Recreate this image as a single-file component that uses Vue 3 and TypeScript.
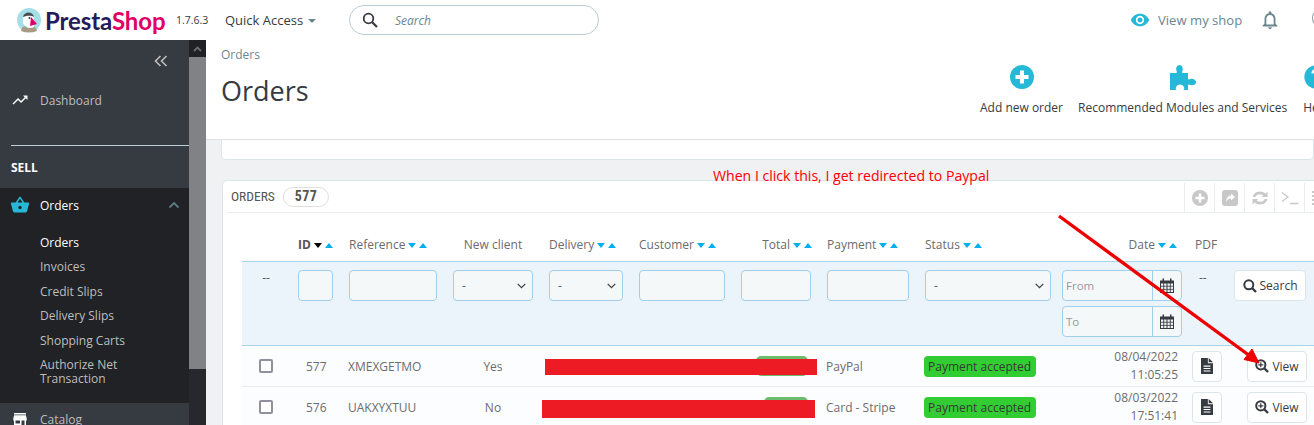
<script setup lang="ts">
const subItems = ['Orders', 'Invoices', 'Credit Slips', 'Delivery Slips', 'Shopping Carts', 'Authorize Net Transaction']

interface Col { label: string; cls: string; sort: boolean }
const cols: Col[] = [
  { label: '', cls: '', sort: false },
  { label: 'ID', cls: 'h-id', sort: true },
  { label: 'Reference', cls: '', sort: true },
  { label: 'New client', cls: 'h-new', sort: false },
  { label: 'Delivery', cls: '', sort: true },
  { label: 'Customer', cls: '', sort: true },
  { label: 'Total', cls: 'h-total', sort: true },
  { label: 'Payment', cls: '', sort: true },
  { label: 'Status', cls: '', sort: true },
  { label: 'Date', cls: 'h-date', sort: true },
  { label: 'PDF', cls: 'h-pdf', sort: false },
  { label: '', cls: '', sort: false },
]

interface Row {
  id: number; ref: string; isNew: string; pay: string; d: string; t: string;
  totalClass: string; redClass: string
}
const rows: Row[] = [
  { id: 577, ref: 'XMEXGETMO', isNew: 'Yes', pay: 'PayPal', d: '08/04/2022', t: '11:05:25', totalClass: 't1', redClass: 'r1' },
  { id: 576, ref: 'UAKXYXTUU', isNew: 'No', pay: 'Card - Stripe', d: '08/03/2022', t: '17:51:41', totalClass: 't2', redClass: 'r2' },
]
</script>

<template>
  <div class="app">
    <header class="top">
      <div class="logo">
        <svg width="26" height="26" viewBox="0 0 26 26" class="bird">
          <circle cx="13" cy="13" r="12" fill="#a4dfe8" />
          <path d="M5 24 C6 19 8 19 13 19 C18 19 20 20 21 24 Q13 27 5 24Z" fill="#a99a86" />
          <path d="M7 12 C7 6 17 5 18 11 L18 20 C14 22 9 21 7 16Z" fill="#fff" />
          <path d="M7 10 C8 4 17 4 18 10 C14 8 11 9 7 10Z" fill="#4b4b52" />
          <path d="M15 10 L21 17 L14 19 Z" fill="#df0067" />
          <circle cx="13.5" cy="11" r="1" fill="#333" />
        </svg>
        <span class="wordmark"><span class="presta">Presta</span><span class="shop">Shop</span></span>
      </div>
      <span class="version">1.7.6.3</span>
      <span class="quick">Quick Access<i class="caret"></i></span>
      <div class="search">
        <svg width="16" height="16" viewBox="0 0 16 16" fill="none" stroke="#363a41" stroke-width="1.8">
          <circle cx="6.5" cy="6.5" r="4.8" />
          <path d="M10 10 L15 15" stroke-width="2.2" />
        </svg>
        <span>Search</span>
      </div>
      <div class="top-right">
        <svg width="20" height="20" viewBox="0 0 24 24" fill="#25b9d7">
          <path d="M12 4.5C7 4.5 2.73 7.61 1 12c1.73 4.39 6 7.5 11 7.5s9.27-3.11 11-7.5c-1.73-4.39-6-7.5-11-7.5zM12 17c-2.76 0-5-2.24-5-5s2.24-5 5-5 5 2.24 5 5-2.24 5-5 5zm0-8c-1.66 0-3 1.34-3 3s1.34 3 3 3 3-1.34 3-3-1.34-3-3-3z" />
        </svg>
        <span class="shop-link">View my shop</span>
        <svg class="bell" width="22" height="22" viewBox="0 0 24 24" fill="#6c868e">
          <path d="M12 22c1.1 0 2-.9 2-2h-4c0 1.1.9 2 2 2zm6-6v-5c0-3.07-1.63-5.64-4.5-6.32V4c0-.83-.67-1.5-1.5-1.5s-1.5.67-1.5 1.5v.68C7.64 5.36 6 7.92 6 11v5l-2 2v1h16v-1l-2-2zm-2 1H8v-6c0-2.48 1.51-4.5 4-4.5s4 2.02 4 4.5v6z" />
        </svg>
        <i class="avatar"></i>
      </div>
    </header>

    <div class="body">
      <aside class="side">
        <nav class="nav">
          <div class="collapse">
            <svg width="14" height="12" viewBox="0 0 14 12" fill="none" stroke="#bebebe" stroke-width="1.6">
              <path d="M6.5 1 L1.5 6 L6.5 11 M12.5 1 L7.5 6 L12.5 11" />
            </svg>
          </div>
          <div class="dash">
            <svg width="18" height="18" viewBox="0 0 24 24" fill="#fff">
              <path d="M16 6l2.29 2.29-4.88 4.88-4-4L2 16.59 3.41 18l6-6 4 4 6.3-6.29L22 12V6z" />
            </svg>
            <span>Dashboard</span>
          </div>
          <div class="sell">SELL</div>
          <div class="orders-block">
            <div class="orders-head">
              <svg width="20" height="20" viewBox="0 0 24 24" fill="#25b9d7">
                <path d="M17.21 9l-4.38-6.56c-.19-.28-.51-.42-.83-.42-.32 0-.64.14-.83.43L6.79 9H2c-.55 0-1 .45-1 1 0 .09.01.18.04.27l2.54 9.27c.23.84 1 1.46 1.92 1.46h13c.92 0 1.69-.62 1.93-1.46l2.54-9.27L23 10c0-.55-.45-1-1-1h-4.79zM9 9l3-4.4L15 9H9zm3 8c-1.1 0-2-.9-2-2s.9-2 2-2 2 .9 2 2-.9 2-2 2z" />
              </svg>
              <span>Orders</span>
              <svg class="chev" width="12" height="8" viewBox="0 0 12 8" fill="none" stroke="#5c7a84" stroke-width="1.8">
                <path d="M1.5 6.5 L6 2 L10.5 6.5" />
              </svg>
            </div>
            <ul class="sub">
              <li v-for="(s, i) in subItems" :key="s" :class="{ on: i === 0 }">{{ s }}</li>
            </ul>
          </div>
          <div class="catalog">
            <svg width="18" height="18" viewBox="0 0 24 24" fill="#fff">
              <path d="M20 4H4v2h16V4zm1 10v-2l-1-5H4l-1 5v2h1v6h10v-6h4v6h2v-6h1zm-9 4H6v-4h6v4z" />
            </svg>
            <span>Catalog</span>
          </div>
        </nav>
        <div class="scroll">
          <div class="scroll-btn">
            <svg width="9" height="6" viewBox="0 0 9 6" fill="none" stroke="#6a6c70" stroke-width="1.8"><path d="M1 5 L4.5 1.5 L8 5" /></svg>
          </div>
          <div class="scroll-thumb"></div>
        </div>
      </aside>

      <main class="main">
        <section class="page-head">
          <div class="titles">
            <div class="crumb">Orders</div>
            <h1>Orders</h1>
          </div>
          <div class="actions">
            <div class="act">
              <svg width="24" height="24" viewBox="0 0 24 24">
                <circle cx="12" cy="12" r="12" fill="#25b9d7" />
                <path d="M10 5.5h4V10h4.5v4H14v4.5h-4V14H5.5v-4H10z" fill="#fff" />
              </svg>
              <span>Add new order</span>
            </div>
            <div class="act">
              <svg width="26" height="25" viewBox="0 0 26 25" fill="#25b9d7">
                <path d="M0 8h6.5c.8-.9.3-1.5-.1-2.5C5.7 3 7 0 9.5 0s3.8 3 3.1 5.5c-.4 1-.9 1.6-.1 2.5H18v6c.9.8 1.5.3 2.5-.1 2.5-.7 5.5.6 5.5 3.1s-3 3.8-5.5 3.1c-1-.4-1.6-.9-2.5-.1V25h-4.5c.8-.9 1-1.5.6-2.5-.7-1.8-2.3-3-4.1-3s-3.4 1.2-4.1 3c-.4 1-.2 1.6.6 2.5H0z" />
              </svg>
              <span>Recommended Modules and Services</span>
            </div>
            <div class="act">
              <svg width="28" height="28" viewBox="0 0 24 24" fill="#25b9d7">
                <path d="M12 2C6.48 2 2 6.48 2 12s4.48 10 10 10 10-4.48 10-10S17.52 2 12 2zm1 17h-2v-2h2v2zm2.07-7.75l-.9.92C13.45 12.9 13 13.5 13 15h-2v-.5c0-1.1.45-2.1 1.17-2.83l1.24-1.26c.37-.36.59-.86.59-1.41 0-1.1-.9-2-2-2s-2 .9-2 2H8c0-2.21 1.79-4 4-4s4 1.79 4 4c0 .88-.36 1.68-.93 2.25z" />
              </svg>
              <span>Help</span>
            </div>
          </div>
        </section>

        <div class="stub"></div>

        <section class="panel">
          <div class="panel-head">
            <span class="ph-title">ORDERS</span>
            <span class="ph-badge">577</span>
            <div class="tools">
              <div class="tool">
                <svg width="16" height="16" viewBox="0 0 16 16"><circle cx="8" cy="8" r="8" fill="#c8c8c8" /><path d="M6.7 3.5h2.6v3.2h3.2v2.6H9.3v3.2H6.7V9.3H3.5V6.7h3.2z" fill="#fff" /></svg>
              </div>
              <div class="tool">
                <svg width="16" height="16" viewBox="0 0 16 16"><rect width="16" height="16" rx="3" fill="#c8c8c8" /><path d="M9 3.5l4 3.5-4 3.5V8.6C6.8 8.6 5.2 9.6 4.2 12 4 8 6 5.6 9 5.4z" fill="#fff" /></svg>
              </div>
              <div class="tool">
                <svg width="16" height="16" viewBox="0 0 16 16" fill="none" stroke="#c8c8c8" stroke-width="2.6">
                  <path d="M2 7 C3 2.5 9.5 1.5 13 5" />
                  <path d="M14 9 C13 13.5 6.5 14.5 3 11" />
                  <path d="M15.5 1.5v5.5h-5.5z M.5 14.5V9h5.5z" fill="#c8c8c8" stroke="none" />
                </svg>
              </div>
              <div class="tool">
                <svg width="18" height="14" viewBox="0 0 18 14" fill="none" stroke="#c8c8c8" stroke-width="1.3">
                  <path d="M1 1.5 L7 6 L1 10.5 M9 12.5 H17.5" />
                </svg>
              </div>
              <div class="tool">
                <svg width="16" height="16" viewBox="0 0 16 16" fill="none" stroke="#c8c8c8" stroke-width="2" stroke-dasharray="2 1">
                  <path d="M0 2h16M0 6h16M0 10h16M0 14h16" />
                </svg>
              </div>
            </div>
          </div>

          <div class="table">
            <div class="grid head">
              <div v-for="(c, i) in cols" :key="i" class="hcell" :class="c.cls">
                <span>{{ c.label }}</span>
                <span v-if="c.sort" class="sort"><i class="tri down"></i><i class="tri up"></i></span>
              </div>
            </div>

            <div class="grid filter">
              <div class="dash-cell">--</div>
              <div><input class="fi w-id" /></div>
              <div><input class="fi w-ref" /></div>
              <div><select class="fi w-new"><option>-</option></select></div>
              <div><select class="fi w-del"><option>-</option></select></div>
              <div><input class="fi w-cust" /></div>
              <div><input class="fi w-total" /></div>
              <div><input class="fi w-pay" /></div>
              <div><select class="fi w-status"><option>-</option></select></div>
              <div class="dates">
                <div v-for="p in ['From', 'To']" :key="p" class="date-group">
                  <input :placeholder="p" />
                  <span class="addon">
                    <svg width="14" height="15" viewBox="0 0 14 15">
                      <path d="M0 2.5h14V15H0z" fill="#363a41" />
                      <path d="M2.5 .5h1.5v3.5H2.5zM10 .5h1.5v3.5H10z" fill="#363a41" />
                      <g fill="#f2f5f7">
                        <rect x="1" y="5.5" width="2.3" height="2.3" /><rect x="4.2" y="5.5" width="2.3" height="2.3" /><rect x="7.5" y="5.5" width="2.3" height="2.3" /><rect x="10.7" y="5.5" width="2.3" height="2.3" />
                        <rect x="1" y="8.6" width="2.3" height="2.3" /><rect x="4.2" y="8.6" width="2.3" height="2.3" /><rect x="7.5" y="8.6" width="2.3" height="2.3" /><rect x="10.7" y="8.6" width="2.3" height="2.3" />
                        <rect x="1" y="11.7" width="2.3" height="2.3" /><rect x="4.2" y="11.7" width="2.3" height="2.3" /><rect x="7.5" y="11.7" width="2.3" height="2.3" /><rect x="10.7" y="11.7" width="2.3" height="2.3" />
                      </g>
                    </svg>
                  </span>
                </div>
              </div>
              <div class="dash-pdf">--</div>
              <div>
                <button class="btn search-btn">
                  <svg width="14" height="14" viewBox="0 0 14 14" fill="none" stroke="#363a41" stroke-width="2">
                    <circle cx="5.8" cy="5.8" r="4.5" /><path d="M9 9 L13 13" stroke-width="2.4" />
                  </svg>
                  Search
                </button>
              </div>
            </div>

            <div v-for="r in rows" :key="r.id" class="grid row">
              <div class="c-check"><input type="checkbox" class="check" /></div>
              <div class="c-id">{{ r.id }}</div>
              <div class="c-ref">{{ r.ref }}</div>
              <div class="c-new">{{ r.isNew }}</div>
              <div></div>
              <div></div>
              <div class="c-total"><span class="total-badge" :class="r.totalClass"></span></div>
              <div class="c-pay">{{ r.pay }}</div>
              <div class="c-status"><span class="status">Payment accepted</span></div>
              <div class="c-date"><span>{{ r.d }}</span><span>{{ r.t }}</span></div>
              <div>
                <button class="btn pdf-btn">
                  <svg width="12" height="16" viewBox="0 0 14 17" preserveAspectRatio="none">
                    <path d="M0 0h8v5.5h6V17H0z" fill="#363a41" />
                    <path d="M9 0l5 4.5H9z" fill="#363a41" />
                    <path d="M3 8h8v1.2H3zM3 10.6h8v1.2H3zM3 13.2h8v1.2H3z" fill="#fff" />
                  </svg>
                </button>
              </div>
              <div>
                <button class="btn view-btn">
                  <svg width="14" height="14" viewBox="0 0 14 14" fill="none" stroke="#363a41" stroke-width="2">
                    <circle cx="5.8" cy="5.8" r="4.6" />
                    <path d="M9 9 L13 13" stroke-width="2.4" />
                    <path d="M5.8 3.3v5M3.3 5.8h5" stroke-width="1.2" />
                  </svg>
                  View
                </button>
              </div>
            </div>
          </div>
        </section>
      </main>
    </div>

    <span v-for="r in rows" :key="r.id" class="redact" :class="r.redClass"></span>

    <span class="note">When I click this, I get redirected to Paypal</span>
    <svg class="arrow" width="1314" height="425" viewBox="0 0 1314 425">
      <path d="M1059 216 L1250 356" stroke="#ee0000" stroke-width="3.4" fill="none" />
      <path d="M1259 363 L1244 359.5 L1252 349 Z" fill="#ee0000" stroke="#ee0000" stroke-width="1" />
    </svg>
  </div>
</template>

<style scoped>
.app {
  position: relative;
  width: 1314px;
  height: 425px;
  overflow: hidden;
  background: #eff1f2;
  font-family: "Open Sans", "Liberation Sans", sans-serif;
  font-size: 12px;
  color: #6c6c6c;
}

/* Top bar */
.top {
  height: 40px;
  background: #fff;
  display: flex;
  align-items: center;
  white-space: nowrap;
}
.logo {
  display: flex;
  align-items: center;
  margin-left: 16px;
  width: 160px;
  flex: none;
}
.bird { flex: none; }
.wordmark {
  margin-left: 3px;
  font-family: Lato, "Open Sans", sans-serif;
  font-weight: 700;
  font-size: 24px;
  letter-spacing: -0.1px;
}
.presta { color: #251b5b; }
.shop { color: #df0067; }
.version { font-size: 10.5px; color: #363a41; width: 49px; flex: none; }
.quick { font-size: 13px; color: #363a41; width: 124px; flex: none; display: flex; align-items: center; }
.caret {
  display: inline-block;
  margin-left: 5px;
  margin-top: 2px;
  border-left: 4px solid transparent;
  border-right: 4px solid transparent;
  border-top: 4px solid #6c868e;
}
.search {
  width: 250px;
  height: 30px;
  box-sizing: border-box;
  border: 1px solid #bbcdd2;
  border-radius: 15px;
  display: flex;
  align-items: center;
  padding-left: 12px;
  color: #6c868e;
  font-style: italic;
  font-size: 12px;
}
.search span { margin-left: 17px; }
.top-right {
  margin-left: auto;
  display: flex;
  align-items: center;
  position: relative;
  width: 184px;
  box-sizing: border-box;
}
.shop-link { font-size: 13.1px; color: #6c868e; margin-left: 8px; }
.bell { margin-left: 17px; }
.avatar {
  position: absolute;
  right: -8px;
  top: 2px;
  width: 10px;
  height: 14px;
  border: 1px solid #8a9a9f;
  border-radius: 50%;
  box-sizing: border-box;
}

.body { display: flex; height: 385px; }

/* Sidebar */
.side { width: 206px; flex: none; display: flex; }
.nav {
  width: 189px;
  background: #363a41;
  display: flex;
  flex-direction: column;
  color: #bebebe;
  white-space: nowrap;
}
.nav > * { flex: none; }
.collapse {
  height: 42px;
  display: flex;
  justify-content: flex-end;
  align-items: center;
  padding-right: 21px;
}
.dash {
  height: 36px;
  display: flex;
  align-items: center;
  padding-left: 11px;
  gap: 11px;
  margin-bottom: 27px;
  font-size: 12px;
}
.sell {
  margin-left: 11px;
  box-sizing: border-box;
  border-top: 1px solid #bbcdd2;
  padding-top: 14px;
  height: 43px;
  color: #fff;
  font-weight: 700;
  font-size: 12px;
  line-height: 16px;
}
.orders-block {
  background: #202226;
  height: 215px;
}
.orders-head {
  height: 34px;
  display: flex;
  align-items: center;
  padding-left: 10px;
  color: #fff;
  gap: 10px;
  font-size: 12px;
}
.chev { margin-left: auto; margin-right: 9px; }
.sub {
  list-style: none;
  margin: 0;
  padding: 14px 14px 0 40px;
  white-space: normal;
}
.sub li { font-size: 12px; line-height: 14px; margin-bottom: 10.4px; }
.sub li.on { color: #fff; }
.catalog {
  display: flex;
  align-items: center;
  gap: 11px;
  padding: 7px 0 0 11px;
  font-size: 12px;
}
.scroll { width: 17px; background: #808285; display: flex; flex-direction: column; }
.scroll-btn {
  height: 17px;
  background: #1f2125;
  display: flex;
  align-items: center;
  justify-content: center;
}
.scroll-thumb { margin-top: 312px; flex: 1; background: #26282d; }

/* Main */
.main { flex: 1; min-width: 0; overflow: hidden; }
.page-head {
  height: 99px;
  background: #fff;
  border-bottom: 1px solid #dfe3e4;
  display: flex;
  white-space: nowrap;
}
.titles { width: 774px; flex: none; padding-left: 15px; box-sizing: border-box; }
.crumb { font-size: 12px; color: #6c868e; margin-top: 7px; line-height: 16px; }
h1 {
  margin: 10px 0 0;
  font-size: 27px;
  font-weight: 400;
  line-height: 36px;
  color: #363a41;
}
.actions { display: flex; gap: 15px; }
.act {
  display: flex;
  flex-direction: column;
  align-items: center;
  justify-content: flex-end;
  height: 76px;
  font-size: 12px;
  color: #363a41;
}
.act span { margin-top: 11px; line-height: 16px; }
.act svg { display: block; }
.act:nth-child(2) span { margin-top: 10px; }
.act:nth-child(3) span { margin-top: 9px; }

.stub {
  margin-left: 15px;
  height: 19px;
  background: #fff;
  border: 1px solid #dbe6e9;
  border-top: 0;
  border-radius: 0 0 5px 5px;
  box-sizing: content-box;
}
.panel {
  margin: 20px 0 0 16px;
  width: 1140px;
  background: #fff;
  border: 1px solid #dbe6e9;
  border-radius: 5px 0 0 0;
}
.panel-head {
  margin: 0 0 0 3px;
  height: 31px;
  border-bottom: 1px solid #eaedee;
  display: flex;
  align-items: center;
  white-space: nowrap;
}
.ph-title {
  margin: -2px 0 0 5px;
  font-family: "Liberation Sans Narrow", "Roboto Condensed", "Liberation Sans", sans-serif;
  font-size: 13.5px;
  color: #555;
  width: 52px;
  flex: none;
}
.ph-badge {
  width: 46px;
  flex: none;
  height: 20px;
  box-sizing: border-box;
  border: 1px solid #dfdfdf;
  border-radius: 10px;
  text-align: center;
  font-family: "Liberation Sans Narrow", "Roboto Condensed", "Liberation Sans", sans-serif;
  font-weight: 700;
  font-size: 14px;
  letter-spacing: 0.5px;
  line-height: 17px;
  color: #555;
}
.tools { margin-left: 855px; display: flex; flex: none; height: 29px; align-self: flex-start; margin-top: 2px; }
.tool {
  width: 30px;
  flex: none;
  height: 29px;
  box-sizing: border-box;
  border-left: 1px solid #eaedee;
  display: flex;
  align-items: center;
  justify-content: center;
}

/* Table */
.table { margin-left: 19px; }
.grid {
  display: grid;
  grid-template-columns: 56px 51px 104px 96px 90px 102px 86px 98px 137px 130px 42px 80px;
}
.head { height: 48px; }
.hcell {
  display: flex;
  align-items: flex-end;
  padding-bottom: 8px;
  box-sizing: border-box;
  line-height: 16px;
  color: #6c6c6c;
  white-space: nowrap;
}
.h-id { font-weight: 700; color: #555; }
.h-new { justify-content: center; padding-right: 16px; }
.h-total { justify-content: flex-end; padding-right: 15px; }
.h-date { justify-content: flex-end; padding-right: 15px; }
.h-pdf { padding-left: 3px; }
.sort { display: flex; align-items: center; gap: 3px; margin-left: 3px; height: 16px; }
.tri { width: 0; height: 0; border-left: 4px solid transparent; border-right: 4px solid transparent; }
.tri.down { border-top: 5px solid #00aff0; }
.tri.up { border-bottom: 5px solid #00aff0; }
.h-id .tri.down { border-top-color: #000; }

.filter {
  box-sizing: content-box;
  background: #ecf4fb;
  border-top: 1px solid #a8d5ea;
  border-bottom: 1px solid #a8d5ea;
  height: 83px;
  align-items: start;
}
.filter > div { padding-top: 8px; }
.dash-cell { text-align: center; padding-right: 8px; line-height: 16px; color: #555; }
.dash-pdf { padding-left: 7px; line-height: 16px; color: #555; }
.fi {
  display: block;
  height: 31px;
  box-sizing: border-box;
  background: #f4f8f9;
  border: 1px solid #a0d0eb;
  border-radius: 4px;
  font: 12px "Open Sans", sans-serif;
  color: #555;
  padding: 0 8px;
  outline: 0;
}
select.fi {
  appearance: none;
  background: #f4f8f9 url("data:image/svg+xml,%3Csvg xmlns='http://www.w3.org/2000/svg' width='9' height='6'%3E%3Cpath d='M.7.9 4.5 4.7 8.300.9' fill='none' stroke='%23444' stroke-width='1.300'/%3E%3C/svg%3E") no-repeat right 6px center;
}
.w-id { width: 35px; }
.w-ref { width: 88px; }
.w-new { width: 80px; }
.w-del { width: 74px; }
.w-cust { width: 86px; }
.w-total { width: 70px; }
.w-pay { width: 82px; }
.w-status { width: 126px; }
.dates { display: flex; flex-direction: column; gap: 5px; }
.date-group {
  width: 120px;
  height: 31px;
  box-sizing: border-box;
  display: flex;
  background: #f4f8f9;
  border: 1px solid #a0d0eb;
  border-radius: 4px;
  overflow: hidden;
}
.date-group input {
  width: 89px;
  border: 0;
  background: transparent;
  padding: 0 3px;
  box-sizing: border-box;
  font: 11.5px "Open Sans", sans-serif;
  outline: 0;
}
.date-group input::placeholder { color: #999; }
.addon {
  flex: 1;
  border-left: 1px solid #a0d0eb;
  display: flex;
  align-items: center;
  justify-content: center;
}
.btn {
  display: flex;
  align-items: center;
  justify-content: center;
  gap: 3px;
  height: 31px;
  box-sizing: border-box;
  background: #fff;
  border: 1px solid #dbe6e9;
  border-radius: 4px;
  font: 12px "Open Sans", sans-serif;
  color: #363a41;
  padding: 0;
}
.search-btn { width: 72px; }
.pdf-btn { width: 30px; }
.view-btn { width: 60px; margin-left: 13px; }

.row {
  height: 41px;
  box-sizing: border-box;
  background: #fcfdfe;
  border-bottom: 1px solid #eaedee;
  align-items: center;
  color: #6c6c6c;
  white-space: nowrap;
}
.c-check { padding-left: 17px; display: flex; }
.check {
  appearance: none;
  width: 14px;
  height: 14px;
  margin: 0;
  border: 2px solid #8f8f9d;
  border-radius: 2px;
  background: #fff;
}
.c-id { padding-left: 8px; }
.c-ref { margin-left: -1px; }
.c-new { text-align: center; padding-right: 16px; }
.c-pay { margin-left: -1px; }
.c-status { margin-left: -1px; }
.status {
  display: inline-block;
  width: 112px;
  height: 21px;
  box-sizing: border-box;
  padding-left: 4px;
  background: #32cd32;
  border-radius: 4px;
  line-height: 21px;
  color: #383838;
}
.c-date {
  display: flex;
  flex-direction: column;
  align-items: flex-end;
  padding-right: 14px;
  line-height: 18px;
}
.total-badge {
  display: block;
  height: 20px;
  background: #6dbb6d;
  border-radius: 5px;
}
.t1 { margin-left: 15px; width: 52px; }
.t2 { margin-left: 23px; width: 44px; }

/* Annotations laid over the screenshot */
.redact { position: absolute; background: #ed1c24; }
.r1 { left: 545px; top: 359px; width: 272px; height: 16px; }
.r2 { left: 542px; top: 400px; width: 273px; height: 18px; }
.note {
  position: absolute;
  left: 713px;
  top: 167px;
  font-family: "Open Sans", sans-serif;
  font-size: 14.1px;
  line-height: 18px;
  color: #f00;
  white-space: nowrap;
}
.arrow { position: absolute; left: 0; top: 0; pointer-events: none; }
</style>

<style>
html, body { margin: 0; padding: 0; }
</style>
